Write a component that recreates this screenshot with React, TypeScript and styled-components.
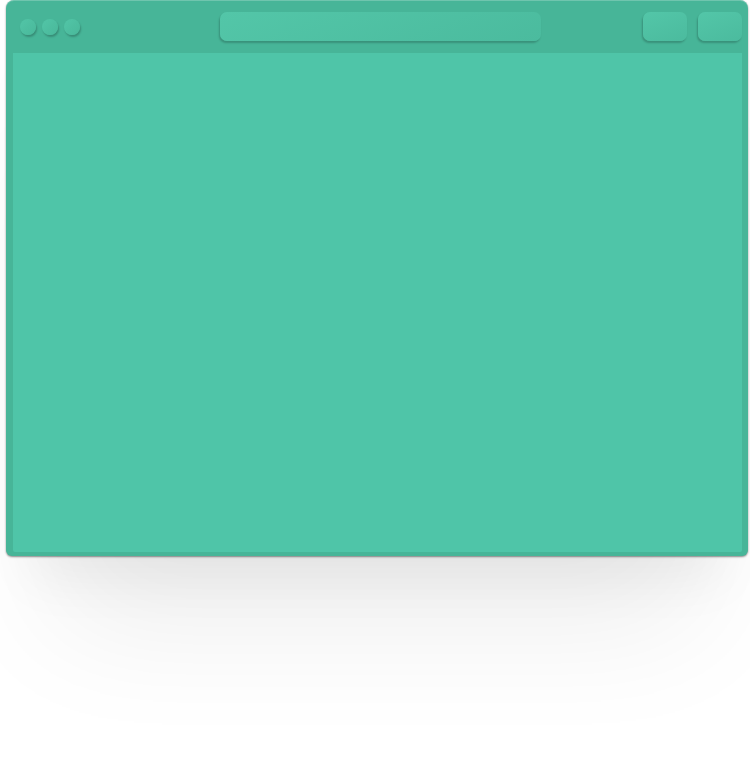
import React from "react";
import styled, { createGlobalStyle } from "styled-components";

const Global = createGlobalStyle`
  html, body { margin: 0; padding: 0; background: #ffffff; }
  body { font-family: "Liberation Sans", Arial, sans-serif; }
`;

const Page = styled.div`
  width: 750px;
  height: 778px;
  background: #ffffff;
  overflow: hidden;
`;

const Window = styled.div`
  margin-left: 6px;
  width: 742px;
  height: 556px;
  border-radius: 8px 8px 6px 6px;
  background: #47b598;
  display: flex;
  flex-direction: column;
  box-shadow:
    inset 0 1px 0 rgba(255, 255, 255, 0.22),
    0 1px 2px rgba(0, 0, 0, 0.45),
    0 50px 50px -25px rgba(0, 0, 0, 0.05),
    0 120px 120px -50px rgba(0, 0, 0, 0.07);
`;

const Toolbar = styled.div`
  height: 53px;
  flex: none;
  display: flex;
  align-items: center;
  padding: 0 6px 1px 14px;
  box-sizing: border-box;
`;

const Dots = styled.div`
  display: flex;
  gap: 6px;
  margin-top: 2px;
`;

const Dot = styled.div`
  width: 16px;
  height: 16px;
  border-radius: 50%;
  background: linear-gradient(135deg, #52c5a7 0%, #49b89a 100%);
  box-shadow: 1px 2px 2px rgba(0, 0, 0, 0.22);
`;

const raised = `
  background: linear-gradient(160deg, #53c6a8 0%, #4bbb9e 100%);
  box-shadow: -1px 2px 2px rgba(0, 0, 0, 0.2);
  border-radius: 7px;
  height: 29px;
`;

const AddressBar = styled.div`
  ${raised}
  width: 321px;
  margin-left: 140px;
`;

const Spacer = styled.div`
  flex: 1;
`;

const Buttons = styled.div`
  display: flex;
  gap: 11px;
`;

const ToolButton = styled.div`
  ${raised}
  width: 44px;
`;

const Viewport = styled.div`
  flex: 1;
  margin: 0 6px 4px 7px;
  background: #4fc5a8;
  border-radius: 0 0 2px 2px;
`;

export default function App() {
  return (
    <Page>
      <Global />
      <Window>
        <Toolbar>
          <Dots>
            <Dot />
            <Dot />
            <Dot />
          </Dots>
          <AddressBar />
          <Spacer />
          <Buttons>
            <ToolButton />
            <ToolButton />
          </Buttons>
        </Toolbar>
        <Viewport />
      </Window>
    </Page>
  );
}
